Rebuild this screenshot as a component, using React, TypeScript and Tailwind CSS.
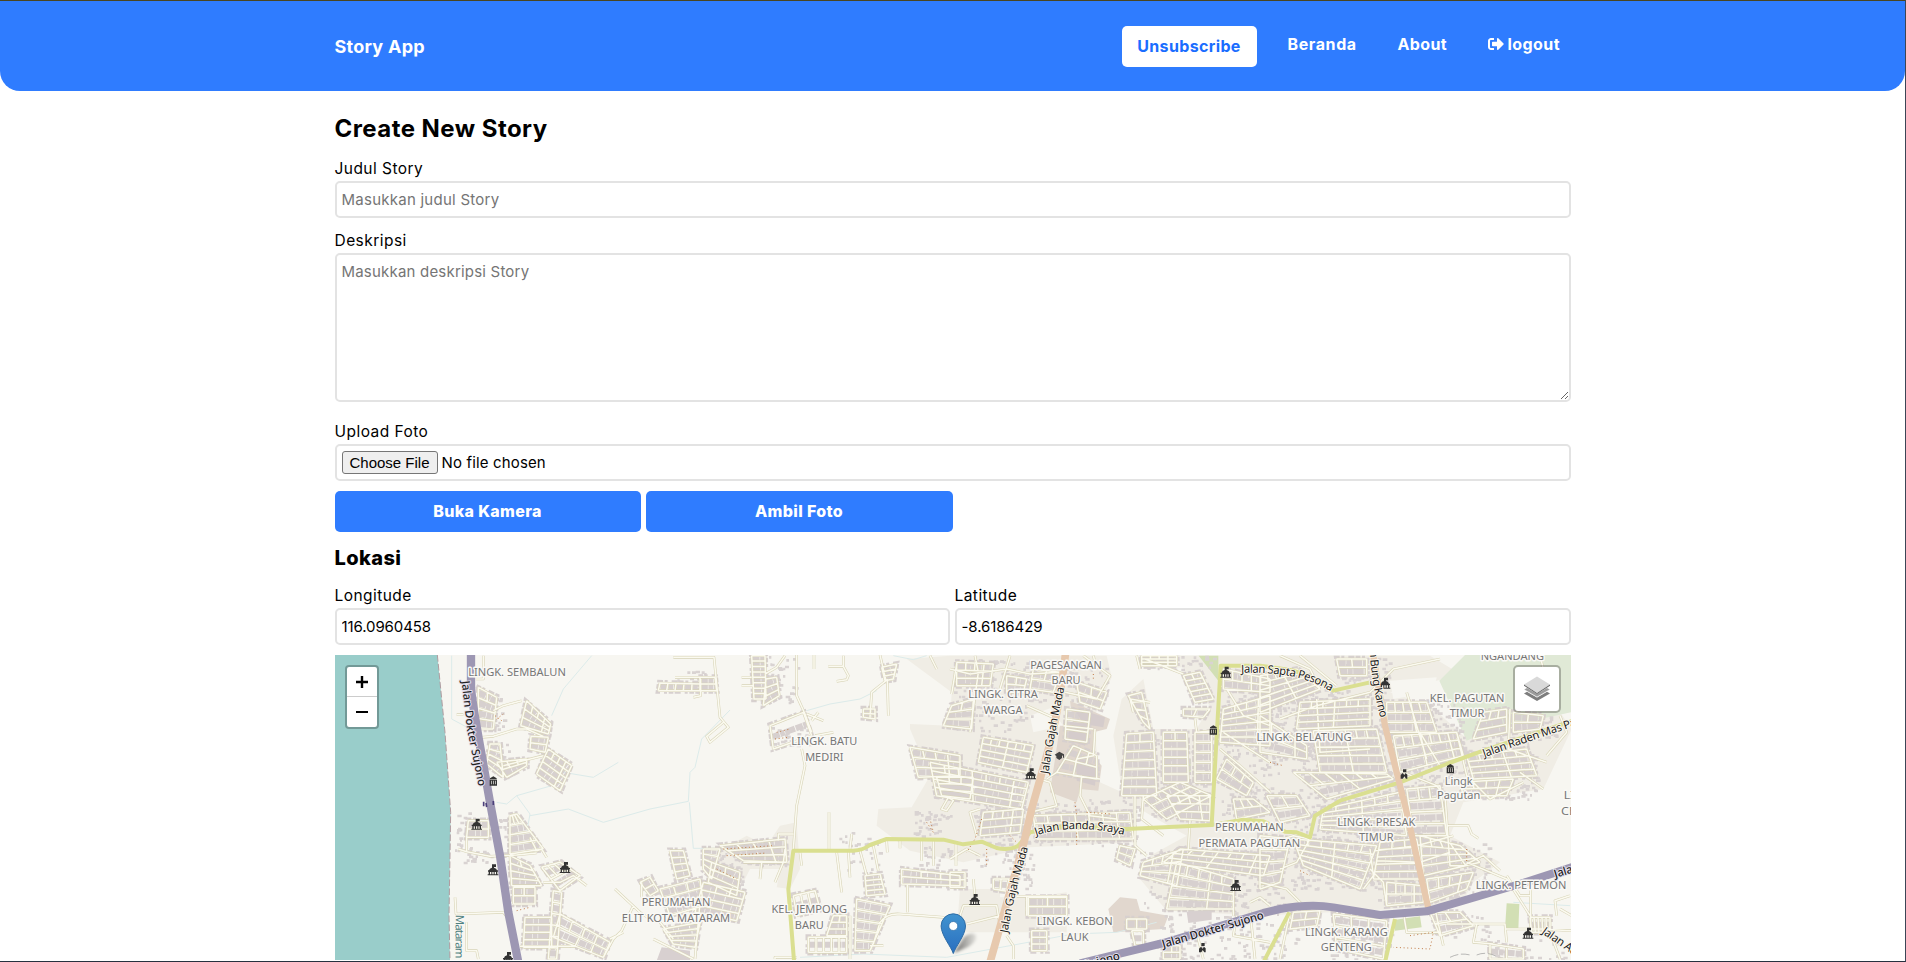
import { FaSignOutAlt } from 'react-icons/fa';

type Quad = [number, number, number, number, number, number, number, number, number, number];

// The map is drawn in tile units, three per CSS pixel. Each sector has its own x origin.
type Sector = { ox: number; blocks: Quad[]; streets: string[] };

const SECTORS: Sector[] = [
  {
    ox: 0,
    blocks: [
      [445, 115, 500, 145, 490, 240, 445, 240, 4, 2],
      [590, 155, 662, 225, 655, 255, 572, 230, 3, 4],
      [603, 262, 655, 265, 645, 310, 600, 300, 2, 1],
      [655, 300, 725, 350, 690, 425, 620, 375, 4, 4],
      [480, 285, 510, 285, 520, 385, 470, 345, 4, 1],
      [500, 340, 590, 330, 590, 350, 530, 385, 2, 3],
      [540, 500, 560, 495, 640, 600, 540, 615, 4, 3],
      [540, 620, 600, 650, 635, 710, 545, 710, 4, 2],
      [635, 655, 690, 640, 750, 680, 690, 725, 2, 3],
      [550, 715, 615, 715, 615, 765, 550, 765, 2, 2],
      [585, 805, 665, 805, 665, 895, 580, 895, 4, 1],
      [670, 725, 695, 730, 680, 930, 655, 930, 6, 1],
      [690, 795, 840, 880, 820, 925, 670, 865, 2, 4],
      [415, 515, 475, 515, 475, 565, 410, 565, 2, 1],
    ],
    streets: [
      'M380 197H400', 'M455 265L490 262L560 240L590 240L640 262', 'M490 185L520 170L575 155', 'M520 350L640 320',
      'M385 600L410 608L480 622L560 618L620 612', 'M410 565V608', 'M375 745L378 795L520 790L530 802', 'M410 820V905H440L445 930',
      'M855 720L930 790L960 810', 'M820 925L850 870L875 845L910 770', 'M600 565L620 605L635 600L650 625', 'M570 892H735L750 860',
      'M770 710L730 680L690 700L640 700', 'M840 870L880 850', 'M935 700V745', 'M438 90H460V20',
    ],
  },
  {
    ox: 930,
    blocks: [
      [60, 102, 180, 105, 180, 125, 55, 125, 1, 5],
      [180, 85, 225, 85, 230, 125, 180, 125, 2, 1],
      [335, 20, 375, 20, 378, 150, 342, 150, 8, 1],
      [378, 90, 410, 85, 418, 140, 370, 170, 3, 1],
      [390, 230, 490, 190, 515, 260, 400, 300, 1, 1],
      [670, 180, 705, 180, 705, 210, 670, 205, 2, 1],
      [725, 55, 770, 45, 760, 90, 735, 95, 3, 1],
      [810, 295, 960, 320, 960, 380, 835, 385, 3, 4],
      [890, 385, 1000, 385, 990, 450, 905, 440, 3, 3],
      [190, 600, 240, 600, 215, 690, 190, 660, 4, 1],
      [215, 640, 300, 670, 290, 740, 205, 700, 3, 2],
      [240, 590, 435, 570, 440, 640, 310, 635, 3, 4],
      [90, 605, 130, 605, 150, 680, 110, 690, 4, 1],
      [0, 700, 30, 685, 55, 725, 30, 740, 2, 1],
      [60, 720, 180, 690, 190, 770, 90, 800, 3, 3],
      [190, 700, 315, 730, 290, 815, 165, 790, 4, 3],
      [70, 840, 180, 820, 165, 895, 100, 885, 4, 1],
      [675, 680, 720, 675, 735, 735, 680, 740, 4, 1],
      [785, 660, 960, 680, 960, 710, 785, 705, 2, 3],
      [650, 750, 750, 770, 690, 905, 645, 905, 5, 1],
      [505, 865, 620, 865, 620, 910, 505, 910, 1, 5],
      [580, 800, 620, 800, 620, 860, 560, 860, 3, 2],
      [460, 740, 525, 725, 540, 780, 470, 800, 1, 3],
    ],
    streets: [
      'M100 25H222L240 205L265 235L210 280L200 262L250 220', 'M105 85H180', 'M160 145L182 140V90', 'M375 75L410 55L435 20', 'M305 85H335', 'M305 110H340',
      'M470 18V140L495 195L515 250', 'M485 300L495 350L470 470L460 600', 'M522 18V60', 'M565 52H610L625 80L620 92L590 97', 'M610 20V52',
      'M720 18L738 95L695 130L690 205', 'M742 90L745 200', 'M567 490V600', 'M500 195L550 215', 'M515 215L535 190', 'M525 260L580 250', 'M415 575V555H460',
      'M435 600L430 640L405 700', 'M310 640H430', 'M365 640L360 690', 'M590 610L605 730', 'M625 605L630 685', 'M660 605L680 680',
      'M700 590L715 665', 'M635 555L630 600', 'M740 575L742 610', 'M780 575V598', 'M845 575V635', 'M880 575V650', 'M948 650V580',
      'M802 705V790', 'M700 885L720 820Q740 792 780 795L910 805L960 830', 'M690 890H730', 'M40 870L160 930', 'M165 930L180 760',
      'M60 820L100 870', 'M480 610L485 650', 'M905 480L925 445L940 455L920 485Z', 'M870 20L890 60', 'M950 45L935 135', 'M630 800V930', 'M405 930V925H470',
    ],
  },
  {
    ox: 1860,
    blocks: [
      [5, 170, 70, 150, 65, 240, -20, 230, 3, 2],
      [20, 40, 130, 45, 120, 110, 20, 110, 3, 4],
      [170, 80, 230, 90, 220, 130, 170, 130, 2, 2],
      [250, 60, 330, 70, 310, 130, 240, 120, 2, 2],
      [380, 100, 470, 130, 450, 180, 390, 160, 2, 2],
      [100, 265, 250, 290, 230, 370, 85, 340, 4, 6],
      [-60, 340, 235, 400, 215, 480, -40, 440, 4, 7],
      [100, 490, 220, 480, 210, 550, 90, 560, 3, 4],
      [350, 180, 420, 190, 410, 280, 345, 270, 3, 1],
      [370, 290, 440, 320, 440, 390, 320, 370, 2, 3],
      [250, 500, 540, 490, 550, 570, 260, 570, 3, 7],
      [575, 20, 680, 20, 680, 50, 575, 50, 3, 4],
      [535, 140, 575, 130, 600, 240, 580, 220, 4, 1],
      [530, 255, 610, 250, 620, 440, 515, 440, 7, 2],
      [640, 250, 710, 250, 715, 400, 640, 400, 6, 2],
      [735, 250, 785, 250, 785, 400, 735, 400, 5, 1],
      [580, 450, 690, 400, 785, 440, 650, 510, 3, 4],
      [650, 440, 780, 440, 780, 515, 690, 510, 3, 4],
      [700, 80, 750, 70, 790, 150, 735, 160, 5, 2],
      [700, 180, 780, 180, 760, 205, 700, 200, 1, 2],
      [820, 60, 960, 90, 960, 130, 820, 120, 2, 5],
      [820, 180, 960, 140, 960, 290, 810, 280, 6, 4],
      [830, 330, 910, 400, 890, 440, 800, 390, 2, 3],
      [850, 450, 910, 450, 960, 490, 860, 510, 2, 3],
      [690, 600, 960, 620, 940, 680, 640, 640, 3, 7],
      [580, 640, 700, 600, 680, 710, 570, 680, 3, 4],
      [680, 640, 850, 690, 850, 780, 650, 780, 4, 5],
      [510, 590, 555, 600, 540, 650, 500, 630, 2, 1],
      [235, 745, 350, 745, 350, 800, 235, 800, 2, 2],
      [245, 845, 290, 845, 290, 905, 245, 905, 3, 1],
      [530, 810, 590, 810, 590, 840, 530, 840, 1, 2],
      [545, 845, 580, 845, 580, 890, 555, 890, 1, 1],
      [640, 890, 690, 890, 690, 930, 640, 930, 2, 2],
      [0, 670, 45, 670, 45, 715, 0, 715, 2, 1],
      [130, 690, 200, 690, 190, 730, 130, 720, 1, 3],
    ],
    streets: [
      'M75 20L85 70L60 250', 'M180 20L150 120', 'M0 60L60 75L170 60L240 75L330 70', 'M345 130L440 150L480 80L400 20', 'M230 170L320 210',
      'M435 240L430 320L380 330L370 380L450 390', 'M340 230L430 240', 'M395 380L390 440L420 500L500 510', 'M290 390L320 370', 'M555 440V590L590 620',
      'M580 440L575 510L640 560', 'M735 210L740 250L790 245', 'M720 515L715 600', 'M820 250L960 340', 'M810 300L870 350L960 430', 'M830 120L880 200L960 230',
      'M850 690V800', 'M900 760L930 745L960 770', 'M20 830L40 770L140 770L150 830', 'M70 690L75 745', 'M50 825L150 800', 'M200 742H350V830', 'M230 742V800',
      'M170 860L190 890V930', 'M0 630L50 600L90 620', 'M235 380L300 400L320 470L240 490', 'M860 800L850 860L960 880', 'M900 785L915 930', 'M740 850L760 930',
      'M80 560L60 490L90 480', 'M560 20L570 60', 'M440 60L430 20', 'M585 30L700 75', 'M600 160L540 150L550 190',
    ],
  },
  {
    ox: 2790,
    blocks: [
      [0, 80, 110, 60, 180, 120, 0, 190, 5, 5],
      [230, 30, 320, 30, 320, 80, 240, 80, 2, 2],
      [120, 160, 330, 150, 330, 230, 110, 240, 4, 6],
      [160, 245, 350, 240, 380, 370, 180, 370, 5, 6],
      [0, 200, 140, 290, 140, 330, 0, 310, 2, 4],
      [380, 160, 500, 160, 530, 250, 380, 250, 3, 5],
      [400, 260, 590, 250, 610, 320, 420, 370, 3, 7],
      [100, 370, 380, 375, 400, 390, 200, 450, 2, 6],
      [20, 440, 110, 440, 150, 500, 60, 520, 2, 2],
      [190, 480, 420, 430, 440, 560, 180, 540, 5, 6],
      [440, 420, 540, 410, 560, 560, 460, 560, 4, 3],
      [100, 570, 350, 590, 300, 720, 130, 650, 5, 6],
      [360, 580, 470, 570, 490, 690, 340, 690, 5, 3],
      [480, 560, 600, 590, 660, 640, 490, 680, 4, 4],
      [380, 700, 490, 710, 490, 760, 380, 770, 2, 4],
      [500, 690, 640, 670, 620, 720, 510, 760, 2, 4],
      [670, 190, 740, 180, 740, 250, 640, 270, 3, 3],
      [760, 190, 850, 200, 840, 240, 760, 250, 2, 2],
      [620, 320, 800, 300, 830, 380, 640, 390, 4, 5],
      [600, 400, 760, 390, 740, 440, 610, 440, 2, 4],
      [0, 560, 90, 570, 60, 700, 0, 720, 4, 2],
      [100, 790, 180, 785, 170, 830, 90, 840, 2, 2],
      [220, 795, 380, 815, 370, 930, 230, 900, 3, 3],
      [510, 790, 600, 790, 640, 830, 540, 860, 2, 2],
      [810, 805, 870, 805, 870, 850, 815, 850, 1, 5],
      [690, 885, 790, 900, 790, 930, 690, 930, 1, 2],
    ],
    streets: [
      'M560 530H625L635 555L655 568', 'M525 780L550 890', 'M560 825H735L740 880', 'M812 720V860', 'M890 800L885 755L930 740', 'M430 370L530 410L555 440L570 650L610 650L670 620L720 665',
      'M345 605L470 590L580 560', 'M350 635L480 640L570 610', 'M60 210L170 170L330 130L400 60L540 30', 'M170 150L180 310L330 300', 'M440 130L500 330', 'M480 250L540 350', 'M590 250L620 380L690 450L790 400',
      'M180 120L150 60L60 20', 'M120 20L230 110', 'M860 320L920 250L900 200', 'M840 20L850 60', 'M750 180L745 300L860 340', 'M780 370L850 420', 'M620 640L740 690L810 800', 'M0 700L80 720L140 780', 'M150 570L110 640L60 660',
      'M90 790L60 930', 'M0 590L100 560L150 570', 'M310 720L340 680L330 600', 'M740 680L780 740H812', 'M650 825L640 880L700 885', 'M735 840H840L935 845', 'M870 850L900 930', 'M430 790L440 850L540 850', 'M380 770L370 700L330 660', 'M900 780L935 800',
    ],
  },
];

const RESIDENTIAL = [
  'M1730 30L1860 20H2330L2345 85L2290 210L2310 400L2420 450L2415 580L2100 595L1900 640L1740 605L1640 530L1645 480L1745 475L1800 380L1740 240V225L1860 230L1865 130Z',
  'M2350 260L2375 150L2440 90L2470 240H2600L2640 170L2570 90L2560 55L2440 60L2430 20H3300L3400 80L3340 90L3180 130L3240 150L3290 160L3400 260L3690 190L3725 240L3640 420L3400 460L3360 560L3510 640L3430 700L3390 770L2800 800L2510 785L2430 690L2460 620L2570 560L2480 510L2380 450Z',
  'M1160 610L1250 560L1310 590L1350 530L1400 520L1410 660L1380 720L1340 715L1350 660L1260 660L1230 720L1140 690Z',
  'M2110 745L2210 730V850H1880L1890 720H2010V745Z',
];

const STREAMS = [
  'M785 20L700 120L665 200', 'M365 20V210L430 245', 'M500 460L530 465L560 440L700 400', 'M560 440L600 495L590 550', 'M600 500L715 480L820 520L960 480L1075 457L1080 370L1095 355L1115 270L1200 183',
  'M700 370L790 385L865 340', 'M1078 460L1090 598H1170', 'M1430 185L1500 165L1590 150L1640 125', 'M1690 20L1750 32L1790 20', 'M1410 925L1600 915L1850 925L2230 855L2360 850L2480 820', 'M3550 760L3720 770', 'M3080 550L3180 470',
];

const YELLOW = [
  'M1392 935L1375 720L1390 605L1570 605Q1600 603 1620 588L1670 570L1840 572L1900 586L1955 578L2000 597Q2040 605 2065 590L2100 550L2210 530L2390 540L2645 528L2672 50H2790L2860 60Q2940 70 3010 125L3120 100',
  'M2645 528L2740 512L2800 517L2865 548L2900 550L2940 565L2955 500L3030 455L3210 400L3350 345L3460 305L3730 215',
  'M2800 940L2878 790',
  'M3165 940L3195 810',
];

const pt = (b: Quad, u: number, v: number) => {
  const x = (1 - v) * ((1 - u) * b[0] + u * b[2]) + v * ((1 - u) * b[6] + u * b[4]);
  const y = (1 - v) * ((1 - u) * b[1] + u * b[3]) + v * ((1 - u) * b[7] + u * b[5]);
  return `${x.toFixed(1)} ${y.toFixed(1)}`;
};

const gridPath = (b: Quad) => {
  let d = '';
  for (let r = 0; r <= b[8]; r++) d += `M${pt(b, 0, r / b[8])}L${pt(b, 1, r / b[8])}`;
  for (let c = 0; c <= b[9]; c++) {
    if (c === 0 || c === b[9] || c % 3 === 0) d += `M${pt(b, c / b[9], 0)}L${pt(b, c / b[9], 1)}`;
    else d += `M${pt(b, c / b[9], 0)}L${pt(b, c / b[9], 1 / b[8])}`;
  }
  return d;
};

const housePath = (b: Quad) => {
  let d = '';
  for (let r = 0; r < b[8]; r++) d += `M${pt(b, 0.03, (r + 0.5) / b[8])}L${pt(b, 0.97, (r + 0.5) / b[8])}`;
  return d;
};

const houseWidth = (b: Quad) => Math.min(18, (Math.hypot(b[6] - b[0], b[7] - b[1]) / b[8]) * 0.7);

const edgePath = (b: Quad) => `M${b[0] - 5} ${b[1] - 6}L${b[2] + 5} ${b[3] - 6}L${b[4] + 6} ${b[5] + 6}L${b[6] - 5} ${b[7] + 6}Z`;

function scatter() {
  let seed = 11;
  const rnd = () => (seed = (seed * 16807) % 2147483647) / 2147483647;
  const zones: [number, number, number, number, number][] = [
    [380, 490, 420, 620, 26], [375, 600, 540, 640, 24], [490, 500, 560, 560, 14], [440, 145, 520, 240, 25], [485, 270, 560, 390, 20],
    [1035, 65, 1130, 95, 8], [1310, 20, 1400, 160, 30], [1320, 230, 1440, 290, 30], [1160, 575, 1370, 650, 90], [1140, 640, 1240, 720, 40],
    [1750, 480, 1860, 560, 40], [1510, 540, 1650, 660, 30], [1760, 590, 1870, 660, 22], [1870, 30, 2110, 250, 120], [2090, 40, 2330, 160, 60],
    [1930, 470, 2090, 650, 70], [2110, 450, 2420, 590, 120], [2030, 600, 2110, 720, 40], [2370, 260, 2640, 500, 100], [2440, 20, 2650, 60, 30],
    [2680, 60, 2950, 330, 200], [2670, 320, 2850, 500, 80], [2430, 600, 2860, 780, 170], [2910, 120, 3170, 400, 300], [3170, 150, 3400, 400, 200],
    [2880, 400, 3220, 720, 400], [3240, 400, 3340, 680, 90], [3340, 580, 3480, 730, 80], [3400, 290, 3620, 450, 140], [3140, 690, 3400, 770, 60],
    [2480, 790, 2900, 930, 130], [3000, 800, 3180, 930, 80], [3300, 790, 3480, 870, 30], [3440, 180, 3680, 300, 70], [3020, 20, 3180, 100, 40], [3480, 870, 3720, 930, 30],
  ];
  let d = '';
  zones.forEach(([x0, y0, x1, y1, n]) => {
    for (let i = 0; i < n; i++) {
      const x = x0 + rnd() * (x1 - x0);
      const y = y0 + rnd() * (y1 - y0);
      const w = 6 + rnd() * 8;
      d += `M${x.toFixed(0)} ${y.toFixed(0)}h${w.toFixed(0)}v8h-${w.toFixed(0)}z`;
    }
  });
  return d;
}

const PLACES: [number, number, number, string][] = [
  [561, 82, 293, 'LINGK. SEMBALUN'],
  [1483, 288, 198, 'LINGK. BATU'], [1483, 335, 115, 'MEDIRI'],
  [1038, 771, 206, 'PERUMAHAN'], [1038, 819, 325, 'ELIT KOTA MATARAM'],
  [1438, 792, 227, 'KEL. JEMPONG'], [1438, 840, 87, 'BARU'],
  [2208, 59, 215, 'PAGESANGAN'], [2208, 105, 87, 'BARU'],
  [2019, 147, 209, 'LINGK. CITRA'], [2019, 195, 117, 'WARGA'],
  [2234, 827, 228, 'LINGK. KEBON'], [2234, 875, 83, 'LAUK'],
  [2758, 545, 206, 'PERUMAHAN'], [2758, 593, 305, 'PERMATA PAGUTAN'],
  [2922, 276, 285, 'LINGK. BELATUNG'],
  [3411, 158, 224, 'KEL. PAGUTAN'], [3411, 205, 104, 'TIMUR'],
  [3547, 33, 190, 'NGANDANG'],
  [3386, 407, 84, 'Lingk'], [3386, 451, 130, 'Pagutan'],
  [3139, 530, 234, 'LINGK. PRESAK'], [3139, 577, 104, 'TIMUR'],
  [3573, 720, 272, 'LINGK. PETEMON'],
  [3049, 860, 248, 'LINGK. KARANG'], [3049, 907, 153, 'GENTENG'],
  [3760, 450, 118, 'LINGK.'], [3768, 498, 150, 'CEMARA'],
];

const ROAD_NAMES: [string, string, number, boolean][] = [
  ['M395 97L411 240L447 420', 'Jalan Dokter Sujono', 320, true],
  ['M2155 376Q2175 240 2205 108', 'Jalan Gajah Mada', 264, false],
  ['M2033 853Q2055 720 2098 586', 'Jalan Gajah Mada', 264, false],
  ['M2118 560Q2230 520 2388 559', 'Jalan Banda Sraya', 268, false],
  ['M2734 72Q2910 65 3010 132', 'Jalan Sapta Pesona', 278, false],
  ['M3119 5Q3125 110 3154 218', 'n Bung Karno', 205, false],
  ['M3463 325Q3600 275 3800 210', 'Jalan Raden Mas Panji', 330, false],
  ['M2500 897L2812 806', 'Jalan Dokter Sujono', 316, true],
  ['M2066 1011L2376 930', 'Jalan Dokter Sujono', 316, true],
  ['M3676 687L3990 590', 'Jalan Dokter Sujono', 316, true],
  ['M3634 852Q3690 890 3850 1000', 'Jalan Adi Sucipto', 250, false],
  ['M377 797L376 1000', 'Mataram Ring', 200, false],
];

function Civic({ x, y }: { x: number; y: number }) {
  return (
    <path
      transform={`translate(${x} ${y})`}
      fill="#333"
      fillRule="evenodd"
      d="M0-18h9v8H3v2q8 2 9 8h3v4h-2v8h3v3h-32v-3h3V4h-2V0h3q1-6 9-8v-10zM-9 5v7h4V5zM-2 5v7h4V5zM5 5v7h4V5z"
    />
  );
}

function Hall({ x, y }: { x: number; y: number }) {
  return (
    <path
      transform={`translate(${x} ${y})`}
      fill="#333"
      fillRule="evenodd"
      d="M0-14l10 6v3h-20v-3zM-11-4h22v18h-22zM-7-1v11h2V-1zM-1-1v11h2V-1zM5-1v11h2V-1z"
    />
  );
}

function Guard({ x, y }: { x: number; y: number }) {
  return (
    <path transform={`translate(${x} ${y})`} fill="#333" d="M-3-14h10v9h-10zM-10 3l6-6 5 6 4-6 5 5v12H6L1 7l-4 7h-7z" />
  );
}

function StoryMap() {
  const grids = SECTORS.map((s) => (
    <g key={s.ox} transform={`translate(${s.ox} 0)`}>
      <path d={s.blocks.map(gridPath).join('') + s.streets.join('')} />
    </g>
  ));
  return (
    <svg className="block h-[305px] w-full" viewBox="15 18 3708 915" preserveAspectRatio="none">
      <rect x="0" y="0" width="3740" height="950" fill="#f7f6f1" />
      {RESIDENTIAL.map((d) => (
        <path key={d} d={d} fill="#f0ede5" />
      ))}
      <path d="M2100 200L2160 178L2200 230L2110 250ZM3180 95L3320 85L3310 130L3190 150Z" fill="#f7f6f1" />
      <path d="M3405 18H3723V190L3490 240L3410 275L3328 95Z" fill="#e0e9d6" />
      <path d="M2220 155L2340 210L2330 240L2290 250V320L2315 350L2305 425L2250 420L2240 460L2160 430L2190 230L2230 230Z" fill="#e1d7ce" />
      <path d="M2370 745L2420 750L2430 785L2515 800L2500 840L2350 850L2335 780Z" fill="#e1d7ce" />
      <path d="M2606 20H2665V95ZM3195 812L3270 802L3275 835L3195 845ZM3530 763L3568 765L3565 840H3525ZM2568 330H2582V368H2568Z" fill="#d2dfb4" />
      <path d="M2570 788L2645 782V812L2575 822ZM995 895L1080 905V935H980Z" fill="#d8d0d0" />
      <path d="M15 18H322L345 250L362 490L357 800L360 935H15Z" fill="#99cdca" />
      <path d="M322 18L345 250L362 490L357 800L360 935" fill="none" stroke="#b09ca0" strokeWidth="3" strokeDasharray="20 7" />
      <path d={STREAMS.join('')} fill="none" stroke="#dcebea" strokeWidth="3" />
      <path d={scatter()} fill="#d9d3d2" />
      {SECTORS.map((s) => (
        <g key={s.ox} transform={`translate(${s.ox} 0)`} fill="none" stroke="#d7d0cf">
          {s.blocks.map((b, i) => (
            <g key={i}>
              <path d={edgePath(b)} strokeWidth="7" strokeDasharray="14 5 9 12 18 4" />
              <path d={housePath(b)} strokeWidth={houseWidth(b)} strokeDasharray="22 2 14 2 31 3" />
            </g>
          ))}
        </g>
      ))}
      <path d="M2230 175L2325 205L2320 235L2260 225ZM2220 220L2280 225L2265 290L2215 275ZM2240 325L2300 350L2295 410L2240 395Z" fill="#d5cccc" />
      <g fill="none" stroke="#d8d4b8" strokeWidth="8" strokeLinejoin="round">{grids}</g>
      <g fill="none" stroke="#fbfaf0" strokeWidth="4.5" strokeLinejoin="round">{grids}</g>
      <g fill="none" stroke="#c07a45" strokeWidth="3" strokeDasharray="3 8">
        <path d="M495 200L515 215M500 210L520 195M560 785L600 775M1180 600L1330 590M1190 620L1310 612M1160 660L1220 690M1340 250L1380 240M1335 270L1375 265M1790 520L1810 550L1800 510" />
        <path d="M1955 510L1935 570L1910 610M1970 600V650M2040 560L2060 580M2270 490L2345 495M2235 460L2240 500M2240 540V590M2290 75V95M3410 600V640M2820 340L2860 350M2910 665L2940 680M3240 860L3310 850L3300 900L3190 895" />
      </g>
      <g fill="none" strokeLinejoin="round">
        {YELLOW.map((d) => (
          <path key={d} d={d} stroke="#dadf90" strokeWidth="12" />
        ))}
        <path d="M2207 10Q2185 200 2150 320L2105 480L2082 580L1980 940" stroke="#e7c9ae" strokeWidth="23" />
        <path d="M3128 10L3165 230L3230 490L3295 778" stroke="#e7c9ae" strokeWidth="19" />
        <path d="M423 10V120Q430 180 450 290L480 460L510 620L535 790L565 940" stroke="#9d97b3" strokeWidth="25" />
        <path d="M2250 943L2500 882L2800 792L2850 780Q2940 764 3010 775L3150 798L3290 787L3570 705L3740 650" stroke="#9d97b3" strokeWidth="24" />
      </g>
      <path d="M461 458v14M468 462l2 12M490 456v12" stroke="#4b3f7a" strokeWidth="5" />
      <path d="M3360 925Q3390 910 3420 918M3440 918Q3470 905 3505 925" fill="none" stroke="#999" strokeWidth="2" strokeDasharray="26 8" />
      {[[440, 527], [489, 664], [705, 657], [534, 927], [2102, 376], [1934, 753], [2687, 71], [2717, 711], [3165, 104], [3594, 854]].map(([x, y]) => (
        <Civic key={`${x}-${y}`} x={x} y={y} />
      ))}
      {[[490, 396], [2650, 243], [3361, 359]].map(([x, y]) => (
        <Hall key={`${x}-${y}`} x={x} y={y} />
      ))}
      <Guard x={3222} y={375} />
      <Guard x={2617} y={896} />
      <path d="M2188 308l14 8v10h-3v-7l-3 2v6l-8 6-9-6v-6l-5-4z" fill="#444" />
      <g fontFamily="'Noto Sans', sans-serif" fontSize="35" fill="#777" stroke="#faf9f6" strokeWidth="9" strokeLinejoin="round" paintOrder="stroke" textAnchor="middle">
        {PLACES.map(([x, y, w, label]) => (
          <text key={`${x}-${y}`} x={x} y={y} textLength={w} lengthAdjust="spacingAndGlyphs">{label}</text>
        ))}
      </g>
      <g fontFamily="'Noto Sans', sans-serif" fontSize="34" strokeWidth="6" strokeLinejoin="round" paintOrder="stroke">
        {ROAD_NAMES.map(([d, label, w, major], i) => (
          <g key={d} fill={i === 11 ? '#4d8080' : '#222'} stroke={i === 11 ? 'none' : major ? '#e4e0ee' : '#faf6ec'}>
            <path id={`road-${i}`} d={d} fill="none" stroke="none" />
            <text textLength={w} fontWeight={major ? 500 : 400}>
              <textPath href={`#road-${i}`} textLength={w}>{label}</textPath>
            </text>
          </g>
        ))}
      </g>
    </svg>
  );
}

function MapMarker() {
  return (
    <svg className="absolute left-[605px] top-[258px] h-[42px] w-[46px]" viewBox="0 0 46 42">
      <defs>
        <linearGradient id="pin" x1="0" y1="0" x2="0" y2="1">
          <stop offset="0" stopColor="#4193cf" />
          <stop offset="1" stopColor="#2a6fc0" />
        </linearGradient>
        <linearGradient id="shade" x1="0" y1="0" x2="1" y2="0">
          <stop offset="0" stopColor="#000" stopOpacity=".55" />
          <stop offset="1" stopColor="#000" stopOpacity=".08" />
        </linearGradient>
        <filter id="soft"><feGaussianBlur stdDeviation="1.8" /></filter>
      </defs>
      <path d="M14 40L24 24Q32 18 36 22Q38 28 28 34Z" fill="url(#shade)" filter="url(#soft)" />
      <path d="M13.300 40.500C11.300 34 1.100 22 1.100 13a12.200 12.200 0 0 1 24.400 0C25.500 22 15.300 34 13.300 40.500Z" fill="url(#pin)" stroke="#2e6ca5" strokeWidth="1" />
      <circle cx="13.300" cy="13" r="4.500" fill="#fff" stroke="#2f6fa9" strokeWidth=".8" />
    </svg>
  );
}

function LayersIcon() {
  return (
    <svg className="h-[26px] w-[26px]" viewBox="0 0 26 26">
      <path d="M0 17.500l13 7.500 13-7.500-3-1.800-10 5.800-10-5.800z" fill="#7d7d7d" />
      <path d="M0 13.500l13 7.500 13-7.500-3-1.800-10 5.800-10-5.800z" fill="#9b9b9b" stroke="#fff" strokeWidth=".5" />
      <path d="M13 .5L26 8.500 13 17 0 8.500z" fill="#d9d9d9" />
      <path d="M0 8.500L13 17l13-8.500v1.200L13 18 0 9.700z" fill="#666" />
    </svg>
  );
}

const label = 'block h-6 text-[15.5px] leading-6 tracking-[0.45px]';
const field = 'block h-[37px] w-full rounded-[5px] border-2 border-[#e3e3e3] bg-white px-[5px] text-[15px] tracking-[-0.1px] outline-none placeholder:tracking-[0.25px] placeholder:text-[#757575]';
const action = 'h-[41px] rounded-[5px] bg-[#2f7cff] pb-[2px] text-base font-extrabold tracking-[0.35px] text-white';

export default function App() {
  return (
    <div className="h-[962px] overflow-hidden border-b border-r border-t border-b-[#27303f] border-r-[#3c4656] border-t-[#4a4520] bg-white font-['Inter',sans-serif] text-black">
      <header className="h-[90px] rounded-b-[20px] bg-[#2f7cff] text-white">
        <div className="mx-auto flex h-full w-[1236px] items-center justify-between">
          <span className="text-[18px] font-bold tracking-[0.25px]">Story App</span>
          <nav className="flex items-center pr-[10px] text-base font-bold tracking-[0.35px]">
            <button className="h-[41px] w-[135px] rounded-[5px] bg-white font-bold text-[#1a6dff]">Unsubscribe</button>
            <a className="ml-[31px] w-[71px] whitespace-nowrap pb-1 tracking-[0.6px]">Beranda</a>
            <a className="ml-[39px] w-[50px] whitespace-nowrap pb-1">About</a>
            <a className="ml-10 flex w-[73px] items-center gap-1 whitespace-nowrap pb-1 tracking-[0.45px]">
              <FaSignOutAlt className="h-4 w-4 shrink-0" />
              logout
            </a>
          </nav>
        </div>
      </header>
      <main className="mx-auto w-[1236px]">
        <h1 className="pt-5 text-[24px] font-bold leading-9 tracking-[0.45px]">Create New Story</h1>
        <div className="pt-[10px]">
          <label className={label}>Judul Story</label>
          <input className={field} placeholder="Masukkan judul Story" />
        </div>
        <div className="pt-[11px]">
          <label className={label}>Deskripsi</label>
          <textarea
            className="block h-[149px] w-full resize-y rounded-[5px] border-2 border-[#e3e3e3] px-[5px] py-[5px] text-[15px] leading-[23px] tracking-[0.2px] outline-none placeholder:text-[#757575]"
            placeholder="Masukkan deskripsi Story"
          />
        </div>
        <div className="pt-[18px]">
          <span className={label}>Upload Foto</span>
          <div className="flex h-[37px] items-center gap-1 rounded-[5px] border-2 border-[#e3e3e3] px-[5px] text-[15px]">
            <button className="h-[23px] w-24 rounded-[3px] border border-[#767676] bg-[#efefef] font-['Liberation_Sans',sans-serif] text-[15px] leading-none">Choose File</button>
            <span className="pt-[2px] tracking-[0.15px]">No file chosen</span>
          </div>
        </div>
        <div className="flex gap-[5px] pt-[10px]">
          <button className={`w-[306px] ${action}`}>Buka Kamera</button>
          <button className={`w-[307px] ${action}`}>Ambil Foto</button>
        </div>
        <h2 className="pt-[11px] text-[20px] font-extrabold leading-[31px] tracking-[0.4px]">Lokasi</h2>
        <div className="flex gap-[5px] pt-[10px]">
          <div className="w-[615px]">
            <label className={label}>Longitude</label>
            <input className={field} defaultValue="116.0960458" />
          </div>
          <div className="w-[616px]">
            <label className={label}>Latitude</label>
            <input className={field} defaultValue="-8.6186429" />
          </div>
        </div>
        <section className="relative mt-[10px] h-[305px] overflow-hidden">
          <StoryMap />
          <MapMarker />
          <div className="absolute left-[10px] top-[10px] flex w-[34px] flex-col rounded border-2 border-black/25 bg-white bg-clip-padding">
            <button className="flex h-[30px] items-center justify-center border-b border-[#ccc]">
              <svg className="h-3 w-3" viewBox="0 0 12 12"><path d="M6 0v12M0 6h12" stroke="#000" strokeWidth="2.4" /></svg>
            </button>
            <button className="flex h-[30px] items-center justify-center">
              <svg className="h-3 w-3" viewBox="0 0 12 12"><path d="M0 6h12" stroke="#000" strokeWidth="2" /></svg>
            </button>
          </div>
          <div className="absolute right-[10px] top-[10px] flex h-12 w-12 items-center justify-center rounded-[5px] border-2 border-black/25 bg-white bg-clip-padding">
            <LayersIcon />
          </div>
        </section>
      </main>
    </div>
  );
}
